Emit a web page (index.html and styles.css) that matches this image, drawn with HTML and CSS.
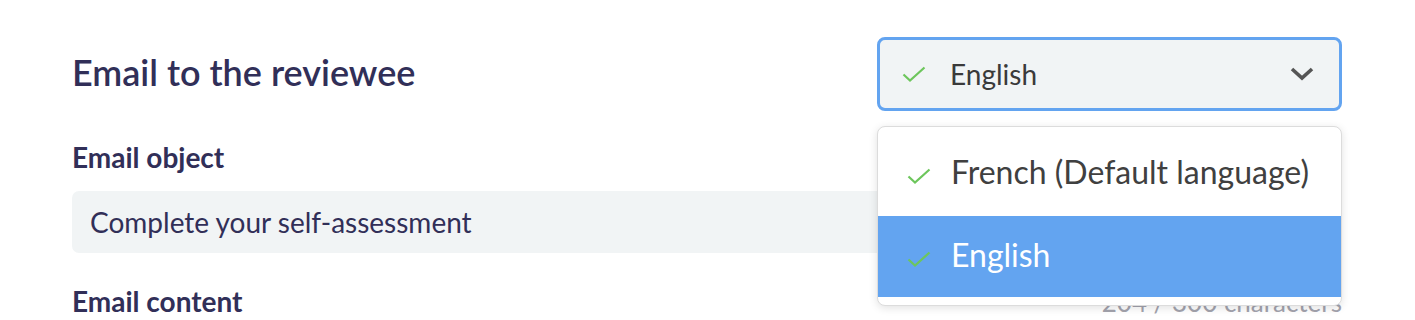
FILE: index.html
```html
<!DOCTYPE html>
<html lang="en">
<head>
    <meta charset="UTF-8">
    <meta name="viewport" content="width=device-width, initial-scale=1.0">
    <title>Email to the reviewee</title>
    <link rel="stylesheet" href="styles.css">
</head>
<body>
    <div class="email-form">
        <div class="form-header">
            <h2>Email to the reviewee</h2>

            <!-- Language picker, open -->
            <div class="lang-picker">
                <div class="lang-select">
                    <svg class="check" width="24" height="16" viewBox="0 0 24 16"><path d="M1.5 8.5 L8 14.5 L22.5 1.5" fill="none" stroke="#6dc65c" stroke-width="2.2"/></svg>
                    <span class="lang-value">English</span>
                    <svg class="chevron" width="24" height="14" viewBox="0 0 24 14"><path d="M2 2 L12 11 L22 2" fill="none" stroke="#555" stroke-width="3.6"/></svg>
                </div>
                <ul class="lang-menu">
                    <li class="lang-option">
                        <svg class="check" width="24" height="16" viewBox="0 0 24 16"><path d="M1.5 8.5 L8 14.5 L22.5 1.5" fill="none" stroke="#6dc65c" stroke-width="2.2"/></svg>
                        French (Default language)
                    </li>
                    <li class="lang-option active">
                        <svg class="check" width="24" height="16" viewBox="0 0 24 16"><path d="M1.5 8.5 L8 14.5 L22.5 1.5" fill="none" stroke="#6dc65c" stroke-width="2.2"/></svg>
                        English
                    </li>
                </ul>
            </div>
        </div>

        <label class="field-label" for="email_object">Email object</label>
        <div class="text-field" id="email_object">Complete your self-assessment</div>

        <div class="content-row">
            <label class="field-label">Email content</label>
            <span class="counter">204 / 300 characters</span>
        </div>
    </div>
</body>
</html>
```

FILE: styles.css
```css
body {
    margin: 0;
    background-color: #fff;
    font-family: "Lato", "Open Sans", sans-serif;
    color: #312f58;
}
.email-form {
    padding: 37px 73px 0 72px;
}
.form-header {
    display: flex;
    justify-content: space-between;
    align-items: center;
}
.form-header h2 {
    margin: 0;
    padding-bottom: 4px;
    font-size: 36px;
    font-weight: 600;
    color: #312f58;
}
.lang-picker {
    position: relative;
    width: 465px;
}
.lang-select {
    display: flex;
    align-items: center;
    height: 68px;
    padding: 0 25px 0 22px;
    background-color: #f1f4f5;
    border: 3px solid #63a4f0;
    border-radius: 8px;
    color: #3a3a3a;
    font-size: 28px;
}
.lang-select .check {
    margin-right: 24px;
}
.lang-value {
    flex: 1;
}
.lang-menu {
    position: absolute;
    top: calc(100% + 15px);
    left: 0;
    right: 0;
    margin: 0;
    padding: 0 0 8px;
    list-style: none;
    background-color: #fff;
    border: 1px solid #dcdcdc;
    border-radius: 8px;
    box-shadow: 0 2px 8px rgba(0, 0, 0, 0.12);
    overflow: hidden;
    z-index: 2;
}
.lang-option {
    display: flex;
    align-items: center;
    height: 89px;
    padding: 0 29px;
    font-size: 32px;
    color: #404040;
}
.lang-option .check {
    margin-right: 20px;
    margin-top: 8px;
}
.lang-option.active {
    height: 77px;
    padding-bottom: 4px;
    background-color: #63a4f0;
    color: #fff;
}
.field-label {
    display: block;
    font-size: 28px;
    line-height: 32px;
    font-weight: 700;
    color: #312f58;
}
.form-header + .field-label {
    margin-top: 30px;
}
.text-field {
    margin-top: 18px;
    height: 62px;
    line-height: 62px;
    padding: 0 18px;
    background-color: #f1f4f5;
    border-radius: 7px;
    font-size: 28px;
    color: #312f58;
}
.content-row {
    display: flex;
    justify-content: space-between;
    align-items: baseline;
    margin-top: 32px;
}
.counter {
    font-size: 26px;
    color: #a3a3ad;
}
```
